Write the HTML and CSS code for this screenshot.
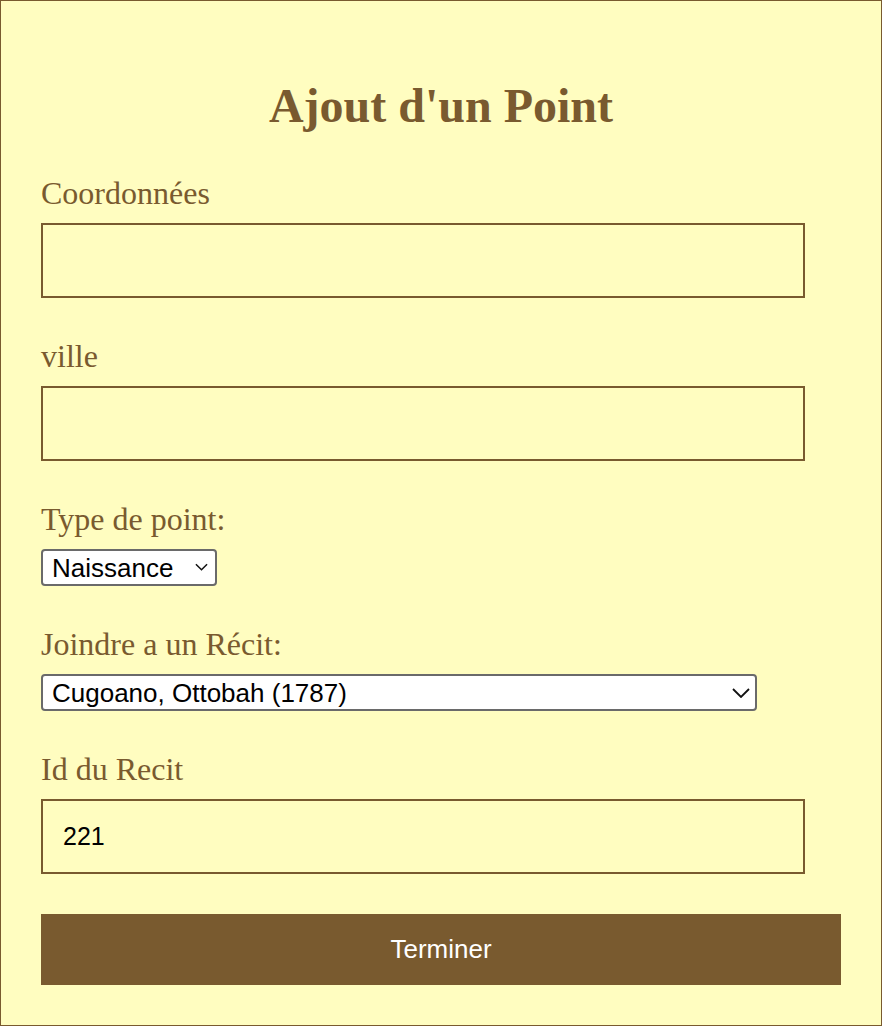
FILE: index.html
```html
<!DOCTYPE html>
<html lang="fr">
<head>
<meta charset="utf-8">
<title>Ajout d'un Point</title>
<link rel="stylesheet" href="styles.css">
</head>
<body>
<div class="page">
  <h1 class="title">Ajout d'un Point</h1>
  <form class="form">
    <div class="field">
      <label class="label" for="coord">Coordonnées</label>
      <input class="text-input" id="coord" type="text">
    </div>
    <div class="field">
      <label class="label" for="ville">ville</label>
      <input class="text-input" id="ville" type="text">
    </div>
    <div class="field">
      <label class="label" for="type">Type de point:</label>
      <div class="select-wrap select-short">
        <select class="select" id="type">
          <option>Naissance</option>
        </select>
        <svg class="chevron chevron-small" viewBox="0 0 14 8" width="13" height="8"><path d="M1 1 L7 7 L13 1" fill="none" stroke="#111" stroke-width="1.6"/></svg>
      </div>
    </div>
    <div class="field">
      <label class="label" for="recit">Joindre a un Récit:</label>
      <div class="select-wrap select-long">
        <select class="select" id="recit">
          <option>Cugoano, Ottobah (1787)</option>
        </select>
        <svg class="chevron chevron-large" viewBox="0 0 18 10" width="18" height="10"><path d="M1 1 L9 9 L17 1" fill="none" stroke="#111" stroke-width="1.8"/></svg>
      </div>
    </div>
    <div class="field">
      <label class="label" for="idrecit">Id du Recit</label>
      <input class="text-input" id="idrecit" type="text" value="221">
    </div>
    <button class="submit" type="button">Terminer</button>
  </form>
</div>
</body>
</html>
```
FILE: styles.css
```css
html, body {
  margin: 0;
  padding: 0;
  background: #fffdc0;
}

.page {
  box-sizing: border-box;
  width: 882px;
  height: 1026px;
  border: 1px solid #795a2f;
  background: #fffdc0;
  padding: 77px 40px 40px;
  color: #795a2f;
  font-family: "Liberation Serif", "Times New Roman", serif;
}

.title {
  margin: 0 0 41px;
  font-size: 48px;
  line-height: 56px;
  font-weight: bold;
  text-align: center;
}

.form {
  display: flex;
  flex-direction: column;
  gap: 40px;
  margin: 0;
}

.field {
  display: flex;
  flex-direction: column;
  align-items: flex-start;
  gap: 12px;
}

.label {
  font-size: 32px;
  line-height: 36px;
}

.text-input {
  box-sizing: border-box;
  width: 764px;
  height: 75px;
  margin: 0;
  border: 2px solid #795a2f;
  background: #fffdc0;
  padding: 0 20px;
  font-family: "Liberation Sans", Arial, sans-serif;
  font-size: 25px;
  color: #000;
  outline: none;
}

.select-wrap {
  position: relative;
  height: 37px;
}

.select-short { width: 176px; }
.select-long { width: 716px; }

.select {
  appearance: none;
  -webkit-appearance: none;
  box-sizing: border-box;
  width: 100%;
  height: 100%;
  margin: 0;
  border: 2px solid #6a6a6a;
  border-radius: 4px;
  background: #fff;
  padding: 0 30px 0 9px;
  font-family: "Liberation Sans", Arial, sans-serif;
  font-size: 26px;
  color: #000;
}

.chevron {
  position: absolute;
  pointer-events: none;
}

.chevron-small {
  right: 9px;
  top: 14px;
}

.chevron-large {
  right: 7px;
  top: 14px;
}

.submit {
  box-sizing: border-box;
  width: 800px;
  height: 71px;
  margin: 0;
  border: none;
  background: #795a2f;
  color: #fff;
  font-family: "Liberation Sans", Arial, sans-serif;
  font-size: 26px;
}
```
